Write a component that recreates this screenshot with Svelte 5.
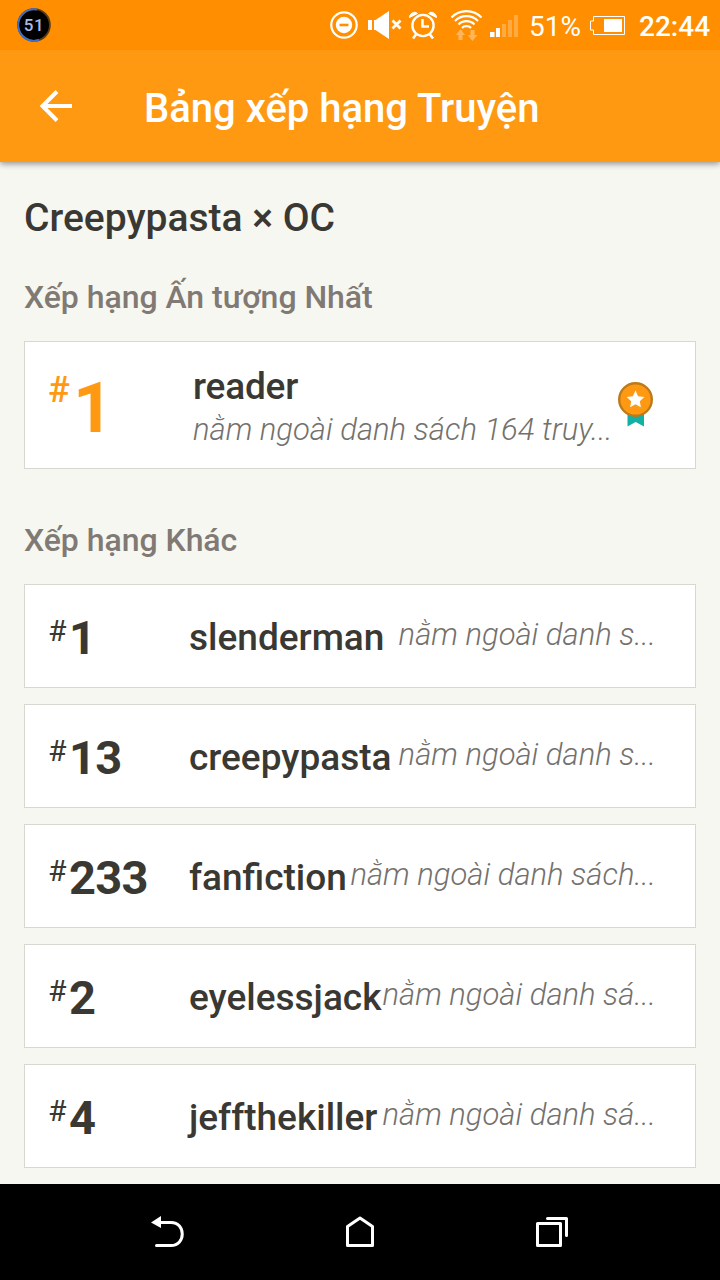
<script>
  const rows = [
    { rank: '1', name: 'slenderman', note: 'nằm ngoài danh s...' },
    { rank: '13', name: 'creepypasta', note: 'nằm ngoài danh s...' },
    { rank: '233', name: 'fanfiction', note: 'nằm ngoài danh sách...' },
    { rank: '2', name: 'eyelessjack', note: 'nằm ngoài danh sá...' },
    { rank: '4', name: 'jeffthekiller', note: 'nằm ngoài danh sá...' }
  ];
</script>

<div class="screen">
  <div class="status">
    <div class="level">
      <svg width="34" height="34" viewBox="0 0 34 34">
        <circle cx="17" cy="17" r="16.8" fill="#5c3c18" />
        <circle cx="17" cy="17" r="15" fill="#000" />
        <path d="M20 1.500A15.800 15.800 0 1 0 22 32" fill="none" stroke="#3f6fc8" stroke-width="2" />
      </svg>
      <span>51</span>
    </div>
    <svg class="icons" width="200" height="50" viewBox="0 0 200 50" fill="none" stroke="#fff">
      <circle cx="14" cy="25" r="12.7" stroke-width="2.2" />
      <circle cx="14" cy="25" r="8.2" fill="#fff" stroke="none" />
      <path d="M9.500 25h9" stroke="#ff8f00" stroke-width="2.600" />
      <path d="M38 20h4v10h-4zM44 20h1.500L59 11v28L45.500 30H44z" fill="#fff" stroke="none" />
      <path d="M62.500 20.500l8 8m0-8l-8 8" stroke-width="2.800" />
      <circle cx="93" cy="25.500" r="10.600" stroke-width="2.400" />
      <path d="M92.500 19v7.500H99" stroke-width="2.500" />
      <path d="M86 34.500l-3 4m17-4l3 4" stroke-width="2.600" />
      <path d="M79.500 17.500c0-4 5-7 8-4zM106.500 17.500c0-4-5-7-8-4z" fill="#fff" stroke-width="1" />
      <path d="M121.500 17.500c8-8.500 22-8.500 30 0M125 21c6-6.500 17-6.500 23 0M128.500 24.500c4-4.500 12-4.500 16 0M132 28c2-2.500 7-2.500 9 0" stroke-width="2.100" />
      <path d="M130.500 29l4.500 6h-2.500v5h-4v-5h-2.500zM142.500 41l5-6h-3v-5h-4v5h-3z" fill="#ffb55c" stroke="none" />
      <path d="M160 32h4.500v5H160zM166 28h4v9h-4z" fill="#fff" stroke="none" />
      <path d="M172 24h4v13h-4zM178 20h4v17h-4zM184 15h4v22h-4z" fill="#ffab42" stroke="none" />
    </svg>
    <span class="percent">51%</span>
    <svg class="battery" width="38" height="50" viewBox="0 0 38 50">
      <path d="M4.500 16.500h31v18h-31v-4.500h-3v-9h3z" fill="none" stroke="#fff" />
      <path d="M15 19h18v13H15z" fill="#fff" />
    </svg>
    <span class="clock">22:44</span>
  </div>

  <header>
    <svg width="34" height="32" viewBox="0 0 34 32" fill="none" stroke="#fff" stroke-width="4">
      <path d="M33 16H4M18 1.500L3.500 16 18 30.500" />
    </svg>
    <h1>Bảng xếp hạng Truyện</h1>
  </header>

  <main>
    <h2>Creepypasta × OC</h2>
    <h3>Xếp hạng Ấn tượng Nhất</h3>
    <section class="card featured">
      <div class="rank"><span class="hash">#</span><strong>1</strong></div>
      <div class="info">
        <div class="name">reader</div>
        <div class="note">nằm ngoài danh sách 164 truy...</div>
      </div>
      <svg class="medal" width="36" height="46" viewBox="0 0 36 46">
        <path d="M9.500 30h16.500v14.500L17.700 40 9.500 44.500z" fill="#12b0a5" />
        <circle cx="17.500" cy="17.500" r="16.300" fill="#ff9912" stroke="#bd7a1b" stroke-width="2.400" />
        <path d="M17.500 8.500l2.600 5.700 6.200.8-4.500 4.300 1.100 6-5.400-3-5.400 3 1.100-6L8.700 15l6.200-.8z" fill="#fff" />
      </svg>
    </section>
    <h3 class="other">Xếp hạng Khác</h3>
    <div class="list">
      {#each rows as row}
        <section class="card row">
          <div class="rank"><span class="hash">#</span><strong>{row.rank}</strong></div>
          <div class="name">{row.name}</div>
          <div class="note">{row.note}</div>
        </section>
      {/each}
    </div>
  </main>

  <nav>
    <svg width="36" height="36" viewBox="0 0 36 36" fill="none" stroke="#fff" stroke-width="3" stroke-linecap="round">
      <path d="M9 8.500h12c15 0 15 23 0 23H6.500" />
      <path d="M1 8.500L11 2v12z" fill="#fff" stroke="none" />
    </svg>
    <svg width="36" height="36" viewBox="0 0 36 36" fill="none" stroke="#fff" stroke-width="3" stroke-linejoin="round">
      <path d="M5.500 12.500L18 4l12.500 8.500v19h-25z" />
    </svg>
    <svg width="36" height="36" viewBox="0 0 36 36" fill="none" stroke="#fff" stroke-width="3" stroke-linejoin="round" stroke-linecap="round">
      <path d="M3.500 9.500h23v22h-23zM13.500 4.500h19v17" />
    </svg>
  </nav>
</div>

<style>
  :global(body) { background: #f6f6f1; }
  .screen {
    width: 720px;
    height: 1280px;
    display: flex;
    flex-direction: column;
    overflow: hidden;
    background: #f6f7f1;
    color: #3a3833;
    font-family: Roboto, sans-serif;
    white-space: nowrap;
  }
  h1, h2, h3 { margin: 0; font-weight: 500; }
  svg { display: block; flex: none; }
  .status {
    flex: none;
    height: 50px;
    display: flex;
    align-items: center;
    background: #ff8f00;
    color: #fff;
    z-index: 2;
  }
  .level { display: grid; margin-left: 17px; width: 34px; height: 34px; }
  .level > * { grid-area: 1 / 1; }
  .level span { place-self: center; color: #aabbe8; font-size: 17px; font-weight: 500; letter-spacing: .5px; }
  .icons { margin-left: 279px; }
  .percent { margin-left: -1px; width: 60px; font-size: 28px; line-height: 52px; padding-top: 3px; }
  .clock { margin-left: 12px; font-size: 28px; font-weight: 500; line-height: 50px; padding-top: 3px; }
  header {
    flex: none;
    height: 112px;
    display: flex;
    align-items: center;
    padding-left: 39px;
    background: #ff9912;
    color: #fff;
    box-shadow: 0 2px 6px rgba(0, 0, 0, .4);
    z-index: 1;
  }
  h1 { margin-left: 71px; padding-top: 6px; font-size: 40px; line-height: 48px; }
  main { flex: 1; min-height: 0; padding: 32px 24px 0; }
  h2 { font-size: 39px; line-height: 48px; }
  h3 { margin-top: 31px; font-size: 32px; line-height: 48px; letter-spacing: -.04px; color: #817974; }
  .card {
    box-sizing: border-box;
    display: flex;
    background: #fff;
    border: 1px solid #d7d8d0;
  }
  .rank { display: flex; flex: none; padding-left: 23px; }
  .hash { flex: none; font-weight: 500; }
  .name { font-weight: 500; font-size: 37px; flex: none; }
  .note { font-style: italic; font-weight: 300; font-size: 31px; color: #73716d; }
  .featured { height: 128px; margin-top: 20px; }
  .featured .rank { width: 145px; color: #ff9912; }
  .featured .hash { width: 25px; font-size: 36px; line-height: 96px; }
  .featured strong { font-size: 70px; line-height: 132px; }
  .info { width: 425px; padding-top: 22px; }
  .info .name { line-height: 46px; letter-spacing: -.2px; }
  .info .note { line-height: 40px; }
  .medal { margin-top: 40px; }
  .other { margin-top: 47px; }
  .list { display: flex; flex-direction: column; gap: 16px; margin-top: 20px; }
  .row { height: 104px; padding-right: 39px; }
  .row .rank { width: 141px; }
  .row .hash { width: 21px; font-size: 30px; font-weight: 400; line-height: 92px; }
  .row strong { font-size: 47px; letter-spacing: -.7px; line-height: 105px; }
  .row .name { line-height: 105px; }
  .row .note { margin-left: auto; line-height: 100px; }
  nav {
    flex: none;
    height: 96px;
    box-sizing: border-box;
    padding: 0 150px;
    display: flex;
    justify-content: space-between;
    align-items: center;
    background: #000;
  }
</style>
